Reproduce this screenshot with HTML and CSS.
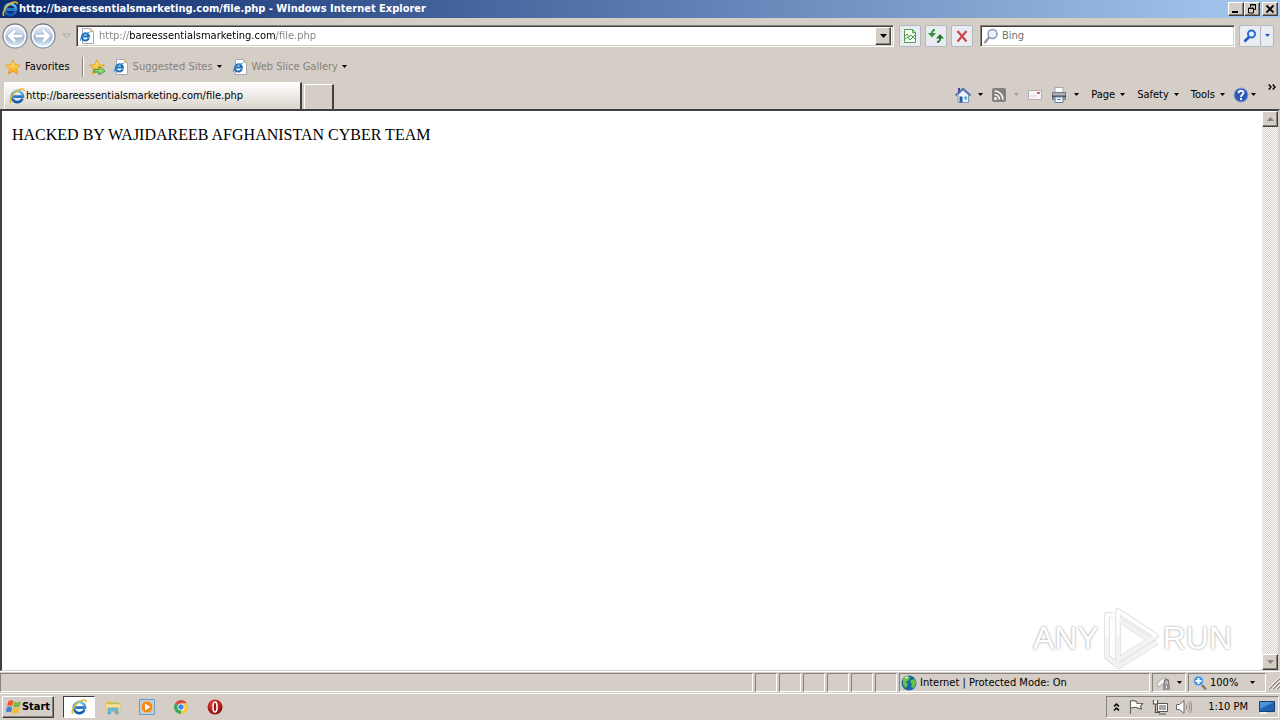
FILE: index.html
```html
<!DOCTYPE html>
<html lang="en">
<head>
<meta charset="utf-8">
<title>http://bareessentialsmarketing.com/file.php - Windows Internet Explorer</title>
<link rel="stylesheet" href="styles.css">
</head>
<body>
<svg class="sprite" aria-hidden="true">
  <defs>
    <linearGradient id="blue" x1="0" y1="0" x2="0" y2="1"><stop offset="0" stop-color="#6cc4f5"/><stop offset="1" stop-color="#0d55ae"/></linearGradient>
    <linearGradient id="glass" x1="0" y1="0" x2="0" y2="1"><stop offset="0" stop-color="#eef2f8"/><stop offset=".45" stop-color="#c3cfe0"/><stop offset=".55" stop-color="#a3b8d2"/><stop offset="1" stop-color="#e2f6ff"/></linearGradient>
    <linearGradient id="rim" x1="0" y1="0" x2="0" y2="1"><stop offset="0" stop-color="#77768a"/><stop offset="1" stop-color="#8fa3b4"/></linearGradient>
    <linearGradient id="gold" x1="0" y1="0" x2="0" y2="1"><stop offset="0" stop-color="#fff08a"/><stop offset="1" stop-color="#fb9c08"/></linearGradient>
    <radialGradient id="red" cx=".4" cy=".3" r=".7"><stop offset="0" stop-color="#f0483c"/><stop offset="1" stop-color="#8c0808"/></radialGradient>
  </defs>
  <symbol id="ie" viewBox="0 0 16 16">
    <path d="M13.6 10.6A5.6 5.6 0 1 1 14 8.6H5.2" fill="none" stroke="url(#blue)" stroke-width="2.6"/>
    <path d="M3 8.5h10" stroke="#1c78c8" stroke-width="2"/>
    <path d="M2.2 14.8C-.6 13.500 2.500 7 7 3.600 10.500.8 15.400-.4 15.300 3.200" fill="none" stroke="#e8b92c" stroke-width="1.500"/>
  </symbol>
  <symbol id="iepage" viewBox="0 0 16 16">
    <path d="M3.500.5h8l3 3v12h-11z" fill="#fff" stroke="#a9a9b4"/><path d="M11.500.5v3h3" fill="#f4d98c" stroke="#c9b27a"/>
    <path d="M9.800 10.200A3.600 3.600 0 1 1 10 8.500H4" fill="none" stroke="#1769b8" stroke-width="2"/>
    <path d="M1.600 13C-.2 11 4.500 5 10.600 4.400" fill="none" stroke="#3f9bdc"/>
  </symbol>
  <symbol id="down" viewBox="0 0 7 4"><path d="M0 0h7L3.500 4z" fill="currentColor"/></symbol>
  <symbol id="star" viewBox="0 0 16 16"><path d="M8 .8l2.100 4.900 5.300.5-4 3.600 1.200 5.200L8 12.200 3.400 15l1.200-5.200-4-3.600 5.300-.5z" fill="url(#gold)" stroke="#e09a18" stroke-width=".8"/></symbol>
</svg>

<header class="titlebar">
  <svg class="icon" viewBox="0 0 16 16"><use href="#ie"/></svg>
  <h1 class="title">http://bareessentialsmarketing.com/file.php - Windows Internet Explorer</h1>
  <div class="window-buttons">
    <button class="winbtn" aria-label="Minimize"><svg viewBox="0 0 12 10"><path d="M2 8h6" stroke="#000" stroke-width="2"/></svg></button>
    <button class="winbtn" aria-label="Restore"><svg viewBox="0 0 12 10"><path d="M4.500 3V.5h5v5H8M4 1h6" fill="none" stroke="#000"/><path d="M2.500 4h5v5h-5zM2 4.500h6" fill="none" stroke="#000"/></svg></button>
    <button class="winbtn close" aria-label="Close"><svg viewBox="0 0 12 10"><path d="M2.500 1.500l7 7m0-7l-7 7" stroke="#000" stroke-width="1.800"/></svg></button>
  </div>
</header>

<nav class="navrow">
  <div class="travel">
    <button class="plain" aria-label="Back"><svg class="orb" viewBox="0 0 26 26"><circle cx="13" cy="13" r="12" fill="url(#glass)" stroke="url(#rim)" stroke-width="1.500"/><circle cx="13" cy="13" r="10.500" fill="none" stroke="#fff" stroke-width="1.500"/><path d="M20 13H8m5-5.500L7.500 13l5.500 5.500" fill="none" stroke="#8fa6c4" stroke-width="4.500"/><path d="M20 13H8m5-5.500L7.500 13l5.500 5.500" fill="none" stroke="#fff" stroke-width="3.200"/></svg></button>
    <button class="plain" aria-label="Forward"><svg class="orb" viewBox="0 0 26 26"><circle cx="13" cy="13" r="12" fill="url(#glass)" stroke="url(#rim)" stroke-width="1.500"/><circle cx="13" cy="13" r="10.500" fill="none" stroke="#fff" stroke-width="1.500"/><path d="M6 13h12m-5-5.500l5.500 5.500-5.500 5.500" fill="none" stroke="#8fa6c4" stroke-width="4.500"/><path d="M6 13h12m-5-5.500l5.500 5.500-5.500 5.500" fill="none" stroke="#fff" stroke-width="3.200"/></svg></button>
    <button class="plain recent" aria-label="Recent pages"><svg viewBox="0 0 9 6"><path d="M1 1h7L4.500 5z" fill="#ddd8d2" stroke="#aaa49c"/></svg></button>
  </div>
  <div class="field address">
    <svg class="icon" viewBox="0 0 16 16"><use href="#iepage"/></svg>
    <input class="url" type="text" aria-label="Address" value="http://bareessentialsmarketing.com/file.php">
    <button class="combo" aria-label="Show addresses"><svg class="down" viewBox="0 0 7 4"><use href="#down"/></svg></button>
  </div>
  <div class="tools">
    <button class="tool" aria-label="Compatibility view"><svg class="icon" viewBox="0 0 16 16"><path d="M2.500 1.500h8l3 3v10h-11z" fill="#f4fbf2" stroke="#4f9b50"/><path d="M10.500 1.500v3h3M3 8l2-2 2 3 2-2 2 2 2-2M3 11l3-2 2 3 3-3 2 2" fill="none" stroke="#4f9b50"/></svg></button>
    <button class="tool" aria-label="Refresh"><svg class="icon" viewBox="0 0 16 16"><path d="M7 2C4.500 2 4 3 4 6" fill="none" stroke="#379238" stroke-width="2"/><path d="M0 5h8L4 9.500z" fill="#379238"/><path d="M9 14c2.500 0 3-1 3-4" fill="none" stroke="#267b2b" stroke-width="2"/><path d="M8 10.500h8L12 6z" fill="#267b2b"/></svg></button>
    <button class="tool" aria-label="Stop"><svg class="icon" viewBox="0 0 16 16"><path d="M3.500 3l9 10.500M12.500 3l-9 10.500" stroke="#c8474b" stroke-width="2.200"/></svg></button>
  </div>
  <div class="field search">
    <svg class="icon" viewBox="0 0 16 16"><circle cx="9.500" cy="6" r="4.500" fill="#e8f2fb" stroke="#8c9bb0" stroke-width="1.500"/><path d="M6 9.500L1.500 15" stroke="#8c8f98" stroke-width="2"/></svg>
    <input type="text" aria-label="Search" placeholder="Bing">
  </div>
  <div class="go">
    <button class="tool" aria-label="Search the web"><svg class="icon" viewBox="0 0 16 16"><circle cx="9.500" cy="6" r="3.500" fill="#e8f4ff" stroke="#2a6bd0" stroke-width="2"/><path d="M7 9l-4.500 4.500" stroke="#2057bd" stroke-width="2.500"/></svg></button>
    <button class="tool thin" aria-label="Search options"><svg class="down small" viewBox="0 0 7 4"><use href="#down"/></svg></button>
  </div>
</nav>

<div class="favorites">
  <button class="plain label"><svg class="icon" viewBox="0 0 16 16"><use href="#star"/></svg>Favorites</button>
  <span class="divider"></span>
  <button class="plain" aria-label="Add to favorites"><svg class="icon" viewBox="0 0 16 16"><use href="#star"/><path d="M5 10.500h5V7.500l6 4.500-6 4v-3H5z" fill="#8be070" stroke="#31882b" stroke-width=".8"/></svg></button>
  <button class="plain label dim"><svg class="icon" viewBox="0 0 16 16"><use href="#iepage"/></svg>Suggested Sites<svg class="down small" viewBox="0 0 7 4"><use href="#down"/></svg></button>
  <button class="plain label dim"><svg class="icon" viewBox="0 0 16 16"><use href="#iepage"/></svg>Web Slice Gallery<svg class="down small" viewBox="0 0 7 4"><use href="#down"/></svg></button>
</div>

<div class="tabrow">
  <div class="tabs">
    <button class="tab"><svg class="icon" viewBox="0 0 16 16"><use href="#ie"/></svg>http://bareessentialsmarketing.com/file.php</button>
    <button class="newtab" aria-label="New tab"></button>
  </div>
  <div class="commands">
    <button class="plain label" aria-label="Home"><svg class="icon" viewBox="0 0 16 16"><path d="M3 1h2v5H3z" fill="#4a3ca0"/><path d="M3 8l5-5 5.500 5v7.500H3z" fill="#edf3fc" stroke="#8297bd"/><path d="M.5 8.500L8 1.500l7.500 7" fill="none" stroke="#4867b2" stroke-width="1.600"/><path d="M4.500 9.500h3v6h-3z" fill="#2b58a4"/><path d="M9.500 9.500h2.500v3H9.500z" fill="#43abc5"/></svg><svg class="down small" viewBox="0 0 7 4"><use href="#down"/></svg></button>
    <button class="plain label faded" aria-label="Feeds"><svg class="icon" viewBox="0 0 16 16"><rect x="1" y="1" width="14" height="14" rx="2" fill="#85817d"/><circle cx="4.500" cy="11.500" r="1.500" fill="#fff"/><path d="M3.500 7.500a5 5 0 0 1 5 5M3.500 4a8.500 8.500 0 0 1 8.500 8.500" fill="none" stroke="#fff" stroke-width="1.600"/></svg><svg class="down small" viewBox="0 0 7 4"><use href="#down"/></svg></button>
    <button class="plain" aria-label="Read mail"><svg class="icon" viewBox="0 0 16 16"><path d="M1.500 3.500h13v9h-13z" fill="#f8f4f6" stroke="#b5adab"/><path d="M10 5h3v2h-3z" fill="#d6646d"/><path d="M3 9h6" stroke="#d5d1df"/></svg></button>
    <button class="plain label" aria-label="Print"><svg class="icon" viewBox="0 0 16 16"><path d="M4 .5h8V6H4z" fill="#fff" stroke="#a4a7ad"/><path d="M1.500 5.500h13v7h-13z" fill="#aeb1b8" stroke="#73767e"/><path d="M1 8.500h14v2H1z" fill="#50545c"/><path d="M4 10h8v5.500H4z" fill="#f3faff" stroke="#62809f"/><path d="M6 12.500h4" stroke="#3b86bc"/></svg><svg class="down small" viewBox="0 0 7 4"><use href="#down"/></svg></button>
    <button class="plain label menu">Page<svg class="down small" viewBox="0 0 7 4"><use href="#down"/></svg></button>
    <button class="plain label menu">Safety<svg class="down small" viewBox="0 0 7 4"><use href="#down"/></svg></button>
    <button class="plain label menu">Tools<svg class="down small" viewBox="0 0 7 4"><use href="#down"/></svg></button>
    <button class="plain help" aria-label="Help"><svg class="icon" viewBox="0 0 16 16"><circle cx="8" cy="8" r="7" fill="#2e57b8" stroke="#8aa3d8"/><path d="M5.500 6.300c0-3.300 5-3.300 5-.5C10.500 7.500 8 7.500 8 10" fill="none" stroke="#fff" stroke-width="1.800"/><path d="M7 11h2v2H7z" fill="#fff"/></svg><svg class="down small" viewBox="0 0 7 4"><use href="#down"/></svg></button>
    <button class="plain more" aria-label="More commands"><svg viewBox="0 0 8 6"><path d="M.7.5L3 3 .7 5.500M4.700.5L7 3 4.700 5.500" fill="none" stroke="#000" stroke-width="1.400"/></svg></button>
  </div>
</div>

<div class="viewport">
  <main class="page"><p>HACKED BY WAJIDAREEB AFGHANISTAN CYBER TEAM</p></main>
  <div class="scrollbar">
    <button class="scroll" aria-label="Scroll up"><svg class="down up" viewBox="0 0 7 4"><path d="M0 4h7L3.500 0z" fill="currentColor"/></svg></button>
    <button class="scroll" aria-label="Scroll down"><svg class="down" viewBox="0 0 7 4"><use href="#down"/></svg></button>
  </div>
  <div class="watermark">
    <span>ANY</span>
    <svg viewBox="0 0 60 64"><g fill="none" stroke-linejoin="round"><path d="M12 9H6v42l12 9 38-24M17 5l38 25-38 24zM17 13l34 22" stroke="#e4e4e4" stroke-width="6"/><path d="M12 9H6v42l12 9 38-24M17 5l38 25-38 24zM17 13l34 22" stroke="#f3f3f3" stroke-width="4"/><path d="M12 9H6v22M17 30V5l38 25" stroke="#fff" stroke-width="3"/></g></svg>
    <span>RUN</span>
  </div>
</div>

<footer class="status">
  <span class="cell message"></span>
  <span class="cell slot"></span><span class="cell slot"></span><span class="cell slot"></span><span class="cell slot"></span><span class="cell slot"></span><span class="cell slot"></span>
  <span class="cell zone"><svg class="icon" viewBox="0 0 16 16"><circle cx="8" cy="8" r="7.500" fill="#1868a8"/><path d="M2 4l4-3 3 1-1 3-3 2 2 2-2 4-3-3zM10 5l4-1 1 4-2 5-3-1 1-3-2-2z" fill="#66c443"/><path d="M4 3l3-1" stroke="#d9f4dd" stroke-width="1.500"/></svg>Internet | Protected Mode: On</span>
  <button class="cell filter" aria-label="Privacy"><svg class="icon" viewBox="0 0 16 16"><path d="M1 11c1-5 5-8 9-8v5c-3 0-6 2-6 4z" fill="#f2f2f4" stroke="#aaa8aa"/><path d="M8.500 9V6.500a2 2 0 0 1 4 0V9" fill="none" stroke="#77757a" stroke-width="1.300"/><path d="M7 9h7v6H7z" fill="#96949a"/><path d="M10 11h1v2h-1z" fill="#fff"/></svg><svg class="down small" viewBox="0 0 7 4"><use href="#down"/></svg></button>
  <button class="cell zoom"><svg class="icon" viewBox="0 0 16 16"><circle cx="6.500" cy="6" r="5" fill="#4193e0" stroke="#b4cce6"/><path d="M6.500 3v6M3.500 6h6" stroke="#fff" stroke-width="2"/><path d="M10 10l4 4.500" stroke="#8b7765" stroke-width="2.500"/></svg><span>100%</span><svg class="down small" viewBox="0 0 7 4"><use href="#down"/></svg></button>
  <svg class="grip" viewBox="0 0 12 14"><path d="M1 13L12 2M5 13l7-7M9 13l3-3" stroke="#88827c" stroke-width="1.500"/><path d="M0 13L12 1M4 13l8-8M8 13l4-4" stroke="#fff"/></svg>
</footer>

<footer class="taskbar">
  <button class="start"><svg class="icon" viewBox="0 0 16 16"><path d="M2.500 2c2-1 3.500-1 5 .2L6.400 7.300C5 6.300 3.500 6.300 1 7.200z" fill="#ed5c27"/><path d="M8.500 2.600c2 1.200 4 1 6.500 0l-1.400 5c-2.400 1-4.100 1-6.200-.1z" fill="#74b943"/><path d="M.8 8.300c2-1 3.800-1 5.400.1L5 13.400c-1.500-1-3-1-5.200-.1z" fill="#3e83cf"/><path d="M7.200 8.700c2 1.100 4 1 6.200 0l-1.300 5c-2.500 1-4.200.9-6.100-.2z" fill="#f7bd23"/></svg>Start</button>
  <button class="task active" aria-label="Internet Explorer"><svg class="icon" viewBox="0 0 16 16"><use href="#ie"/></svg></button>
  <button class="task" aria-label="Windows Explorer"><svg class="icon" viewBox="0 0 16 16"><path d="M1 3l4-2 1 2h8v9H1z" fill="#e7c65c"/><path d="M2 4h12v3H2z" fill="#8fc975"/><path d="M1 5h14v8H1z" fill="#f8e393" stroke="#dfc16a" stroke-width=".6"/><path d="M3 15V9h10v6h-2.500v-3h-5v3z" fill="#74bdde" stroke="#4595bd" stroke-width=".6"/></svg></button>
  <button class="task" aria-label="Media Player"><svg class="icon" viewBox="0 0 16 16"><path d="M.5.500h15v15H.5z" fill="#b5d2ed" stroke="#659dcc"/><circle cx="8" cy="8" r="6" fill="#f08a1b" stroke="#f9c88b"/><path d="M6 4.500v7l5.500-3.500z" fill="#fff"/></svg></button>
  <button class="task" aria-label="Chrome"><svg class="icon" viewBox="0 0 16 16"><path d="M8 8L2 4.500A7 7 0 0 1 14 4.500H8z" fill="#dd4b3e"/><path d="M8 8V4.500h6A7 7 0 0 1 8 15z" fill="#f8ca3f"/><path d="M8 8v7A7 7 0 0 1 2 4.500z" fill="#3aa757"/><circle cx="8" cy="8" r="3.500" fill="#fff"/><circle cx="8" cy="8" r="2.700" fill="#4284ef"/></svg></button>
  <button class="task" aria-label="Opera"><svg class="icon" viewBox="0 0 16 16"><circle cx="8" cy="8" r="7.500" fill="url(#red)"/><ellipse cx="8" cy="8" rx="2" ry="5" fill="#a51515" stroke="#fff" stroke-width="1.600"/></svg></button>
  <div class="tray">
    <button class="plain" aria-label="Show hidden icons"><svg class="chev" viewBox="0 0 7 10"><path d="M1 4.500L3.500 2 6 4.500M1 8.500L3.500 6 6 8.500" fill="none" stroke="#000" stroke-width="1.500"/></svg></button>
    <button class="plain" aria-label="Action center"><svg class="icon" viewBox="0 0 16 16"><path d="M2.500 15V1.500M3 2c3-1 4 0 6 1v1.500h5.500L12.500 7l1 3c-3 0-4-1-5-1.500C6 8 5 8.500 3 9" fill="#fff" stroke="#6a6764" stroke-width="1.200"/></svg></button>
    <button class="plain" aria-label="Network"><svg class="icon" viewBox="0 0 16 16"><path d="M5.500 4.500h10v8h-10z" fill="#fff" stroke="#55524f"/><path d="M7 6h7v5H7z" fill="#aaa6a1"/><path d="M1.500 1.500h4v3.500h-4z" fill="#fff"/><path d="M7 15h7M1.500 1v4h4V1M3.500 5v8.500H8" fill="none" stroke="#55524f" stroke-width="1.200"/></svg></button>
    <button class="plain" aria-label="Volume"><svg class="icon" viewBox="0 0 16 16"><path d="M.5 5.500h3L8 1.500v13l-4.500-4h-3z" fill="#fff" stroke="#6a6764"/><path d="M10 5.500c1 1.500 1 3.500 0 5M12 3.500c2 2.500 2 6.500 0 9M14 2c2.200 3.500 2.200 8.500 0 12" fill="none" stroke="#85817d"/></svg></button>
    <time>1:10 PM</time>
    <button class="plain" aria-label="Show desktop"><svg class="icon" viewBox="0 0 16 16"><path d="M.5 2.500h15v10H.5z" fill="#2262b3" stroke="#153e76"/><path d="M1 3h14L1 10z" fill="#4c92db"/><path d="M1 14h7" stroke="#efefef" stroke-width="2"/></svg></button>
  </div>
</footer>
</body>
</html>
```
FILE: styles.css
```css
* { box-sizing: border-box; }

body {
  margin: 0;
  height: 100vh;
  display: flex;
  flex-direction: column;
  overflow: hidden;
  background: #d5cec6;
  color: #000;
  font: 11px/14px "DejaVu Sans Condensed", "DejaVu Sans", sans-serif;
}

button, input { font: inherit; color: inherit; margin: 0; padding: 0; border: 0; }
button { display: flex; align-items: center; justify-content: center; background: #d5cec6; white-space: nowrap; }
svg { display: block; flex: none; }

.sprite { position: absolute; width: 0; height: 0; }
.icon { width: 16px; height: 16px; }
.down { width: 7px; height: 4px; }
.small { width: 5px; height: 3px; }
.plain { background: none; }
.label { gap: 4px; }

.titlebar {
  display: flex;
  align-items: center;
  gap: 1px;
  height: 18px;
  padding: 0 2px;
  background: linear-gradient(90deg, #0d2a6c, #a6caf0);
}
.title { flex: 1; margin: 0; color: #fff; font-size: 11px; line-height: 14px; font-weight: bold; }
.window-buttons { display: flex; }
.winbtn, .combo, .scroll, .start {
  border: 1px solid;
  border-color: #fff #404040 #404040 #fff;
  box-shadow: inset -1px -1px #85817d;
}
.winbtn { width: 16px; height: 14px; }
.winbtn svg { width: 12px; height: 10px; }
.close { margin-left: 2px; }

.navrow { display: flex; align-items: center; height: 35px; padding: 0 6px 0 2px; }
.travel { display: flex; align-items: center; gap: 2px; width: 74px; }
.orb { width: 26px; height: 26px; }
.recent { margin-left: 4px; }
.recent svg { width: 9px; height: 6px; }
.field {
  display: flex;
  align-items: center;
  height: 22px;
  background: #fff;
  border: 1px solid;
  border-color: #85817d #fff #fff #85817d;
  box-shadow: inset 1px 1px #404040, inset -1px -1px #d5cec6;
}
.field input { flex: 1; min-width: 0; height: 16px; outline: 0; background: none; }
.address { flex: 1; gap: 4px; padding: 1px 2px 1px 2px; }
.address .url {
  color: transparent;
  background: linear-gradient(90deg, #808080 31px, #000 31px, #000 177px, #808080 177px);
  background-clip: text;
  -webkit-background-clip: text;
}
.combo { width: 16px; height: 18px; }
.tools { display: flex; gap: 4px; margin: 0 7px 0 5px; }
.tool { width: 22px; height: 22px; border: 1px solid #b3b7bf; border-radius: 2px; background: #e9edf3; }
.search { width: 255px; padding: 1px 2px; gap: 3px; }
.search input::placeholder { color: #707070; opacity: 1; }
.go { display: flex; margin-left: 4px; }
.thin { width: 13px; border-left: 0; color: #2057bd; }

.favorites { display: flex; align-items: center; height: 27px; padding: 0 5px; }
.divider { width: 2px; height: 20px; margin: 0 5px 0 12px; border-left: 1px solid #85817d; border-right: 1px solid #fff; }
.dim { color: #85817d; margin-left: 8px; }
.dim .down { color: #000; }
.dim + .dim { margin-left: 10px; }

.tabrow { display: flex; justify-content: space-between; height: 29px; padding-left: 4px; }
.tabs { display: flex; align-items: flex-end; gap: 2px; }
.tab {
  width: 298px;
  height: 27px;
  justify-content: flex-start;
  gap: 1px;
  padding-left: 4px;
  border: solid;
  border-width: 1px 2px 0 1px;
  border-color: #fff #404040 #404040 #fff;
  background: linear-gradient(180deg, #fff, #d9d4cc);
}
.newtab { width: 30px; height: 25px; border: solid; border-width: 1px 2px 0 1px; border-color: #fff #404040 #404040 #fff; }
.commands { display: flex; align-items: center; gap: 8px; padding-right: 4px; }
.commands .label:not(.menu) { gap: 7px; }
.faded .down { color: #a39d96; }
.commands .menu { gap: 5px; margin-left: 4px; }
.help { gap: 2px; }
.more { align-self: flex-start; padding-top: 4px; margin-left: 4px; }
.more svg { width: 8px; height: 6px; }

.viewport {
  position: relative;
  flex: 1;
  min-height: 0;
  display: flex;
  background: #fff;
  border: solid;
  border-width: 2px 2px 1px 2px;
  border-color: #404040 #d5cec6 #d5cec6 #404040;
}
.page { flex: 1; padding: 14px 10px; font: 16px/20px "Liberation Serif", serif; }
.page p { margin: 0; }
.scrollbar {
  display: flex;
  flex-direction: column;
  justify-content: space-between;
  width: 16px;
  background: repeating-conic-gradient(#fff 0 25%, #d5cec6 0 50%) 0 0 / 2px 2px;
}
.scroll { width: 16px; height: 16px; color: #85817d; }
.watermark {
  position: absolute;
  right: 46px;
  bottom: 0;
  display: flex;
  align-items: center;
  gap: 2px;
  color: #fff;
  font: 32px/44px "Liberation Sans", sans-serif;
  text-shadow: 0 0 2px #aaa, 0 0 3px #ccc;
}
.watermark svg { width: 60px; height: 64px; }

.status { display: flex; align-items: center; gap: 2px; height: 23px; border-top: 1px solid #fff; border-bottom: 1px solid #fff; }
.cell { display: flex; align-items: center; height: 19px; border: 1px solid; border-color: #85817d #fff #fff #85817d; white-space: nowrap; }
.message { flex: 1; }
.slot { width: 22px; }
.zone { width: 251px; gap: 3px; padding-left: 1px; }
.filter { width: 34px; gap: 5px; }
.zoom { width: 78px; gap: 2px; justify-content: flex-start; padding: 0 10px 0 3px; }
.zoom span { flex: 1; text-align: left; }
.grip { width: 12px; height: 14px; }

.taskbar { display: flex; align-items: center; height: 26px; padding: 0 1px 0 2px; }
.start { width: 52px; height: 22px; margin-right: 9px; font-weight: bold; }
.task { width: 32px; height: 22px; margin-right: 2px; background: none; }
.active { background: #fff; border: 1px solid; border-color: #404040 #fff #fff #404040; }
.tray {
  display: flex;
  align-items: center;
  gap: 8px;
  height: 22px;
  margin-left: auto;
  padding: 0 3px 0 6px;
  border: 1px solid;
  border-color: #85817d #fff #fff #85817d;
}
.tray time { margin: 0 3px 0 8px; }
.chev { width: 7px; height: 10px; }
```
